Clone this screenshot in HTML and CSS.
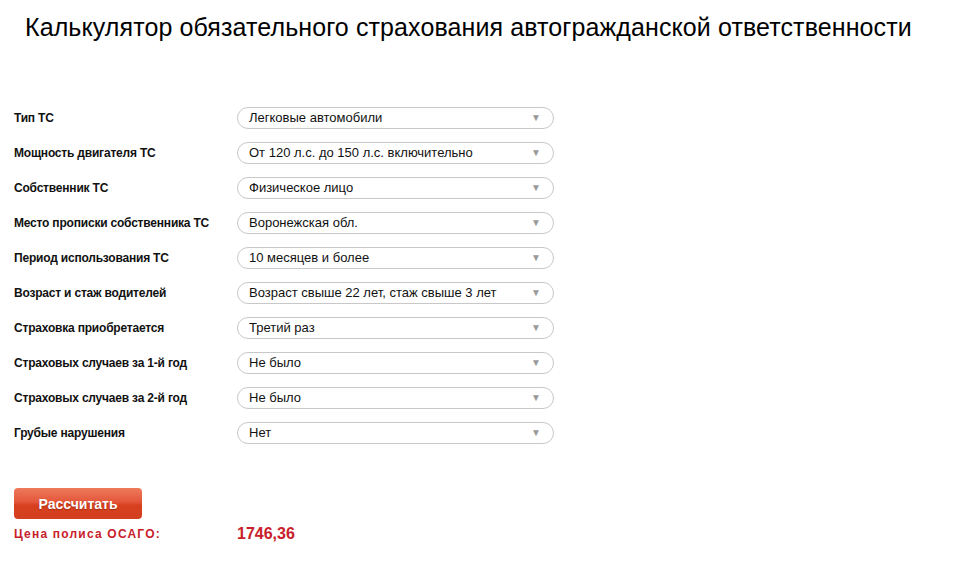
FILE: index.html
```html
<!DOCTYPE html>
<html lang="ru">
<head>
    <meta charset="UTF-8">
    <meta name="viewport" content="width=device-width, initial-scale=1.0">
    <title>Калькулятор ОСАГО</title>
    <link rel="stylesheet" href="styles.css">
</head>
<body>

<h1 class="title">Калькулятор обязательного страхования автогражданской ответственности</h1>

<div class="calc">
    <div class="row">
        <div class="label">Тип ТС</div>
        <div class="select"><span>Легковые автомобили</span><span class="arrow">▼</span></div>
    </div>
    <div class="row">
        <div class="label">Мощность двигателя ТС</div>
        <div class="select"><span>От 120 л.с. до 150 л.с. включительно</span><span class="arrow">▼</span></div>
    </div>
    <div class="row">
        <div class="label">Собственник ТС</div>
        <div class="select"><span>Физическое лицо</span><span class="arrow">▼</span></div>
    </div>
    <div class="row">
        <div class="label">Место прописки собственника ТС</div>
        <div class="select"><span>Воронежская обл.</span><span class="arrow">▼</span></div>
    </div>
    <div class="row">
        <div class="label">Период использования ТС</div>
        <div class="select"><span>10 месяцев и более</span><span class="arrow">▼</span></div>
    </div>
    <div class="row">
        <div class="label">Возраст и стаж водителей</div>
        <div class="select"><span>Возраст свыше 22 лет, стаж свыше 3 лет</span><span class="arrow">▼</span></div>
    </div>
    <div class="row">
        <div class="label">Страховка приобретается</div>
        <div class="select"><span>Третий раз</span><span class="arrow">▼</span></div>
    </div>
    <div class="row">
        <div class="label">Страховых случаев за 1-й год</div>
        <div class="select"><span>Не было</span><span class="arrow">▼</span></div>
    </div>
    <div class="row">
        <div class="label">Страховых случаев за 2-й год</div>
        <div class="select"><span>Не было</span><span class="arrow">▼</span></div>
    </div>
    <div class="row">
        <div class="label">Грубые нарушения</div>
        <div class="select"><span>Нет</span><span class="arrow">▼</span></div>
    </div>

    <button class="calc-btn" type="button">Рассчитать</button>

    <div class="result">
        <div class="result-label">Цена полиса ОСАГО:</div>
        <div class="result-value">1746,36</div>
    </div>
</div>

</body>
</html>
```

FILE: styles.css
```css
body {
    font-family: 'Liberation Sans', Arial, sans-serif;
    background: #fff;
    color: #000;
    margin: 0;
}
.title {
    font-weight: normal;
    font-size: 25px;
    line-height: 28px;
    letter-spacing: 0.1px;
    margin: 13px 0 0 25px;
}
.calc {
    padding: 59px 0 0 14px;
}
.row {
    display: flex;
    align-items: center;
    height: 35px;
}
.label {
    width: 223px;
    font-size: 12px;
    font-weight: bold;
    letter-spacing: -0.2px;
    color: #111;
}
.select {
    width: 292px;
    height: 20px;
    border: 1px solid #c8c8c8;
    border-radius: 11px;
    display: flex;
    align-items: center;
    justify-content: space-between;
    padding: 0 12px 0 11px;
    font-size: 13px;
    color: #111;
}
.select .arrow {
    font-size: 10px;
    color: #9a9a9a;
}
.calc-btn {
    display: block;
    margin-top: 38px;
    width: 128px;
    height: 31px;
    border: none;
    border-radius: 4px;
    background: linear-gradient(to bottom, #ee7a5c 0%, #e4563a 45%, #d8401f 55%, #d2401f 100%);
    color: #fff;
    font-family: 'Liberation Sans', Arial, sans-serif;
    font-size: 14px;
    font-weight: bold;
    text-shadow: 0 1px 1px rgba(120, 30, 10, 0.6);
    cursor: pointer;
}
.result {
    display: flex;
    align-items: center;
    margin-top: 6px;
}
.result-label {
    width: 223px;
    font-size: 12px;
    font-weight: bold;
    color: #c8202a;
    letter-spacing: 1.2px;
}
.result-value {
    font-size: 16px;
    font-weight: bold;
    color: #c8202a;
}
```
